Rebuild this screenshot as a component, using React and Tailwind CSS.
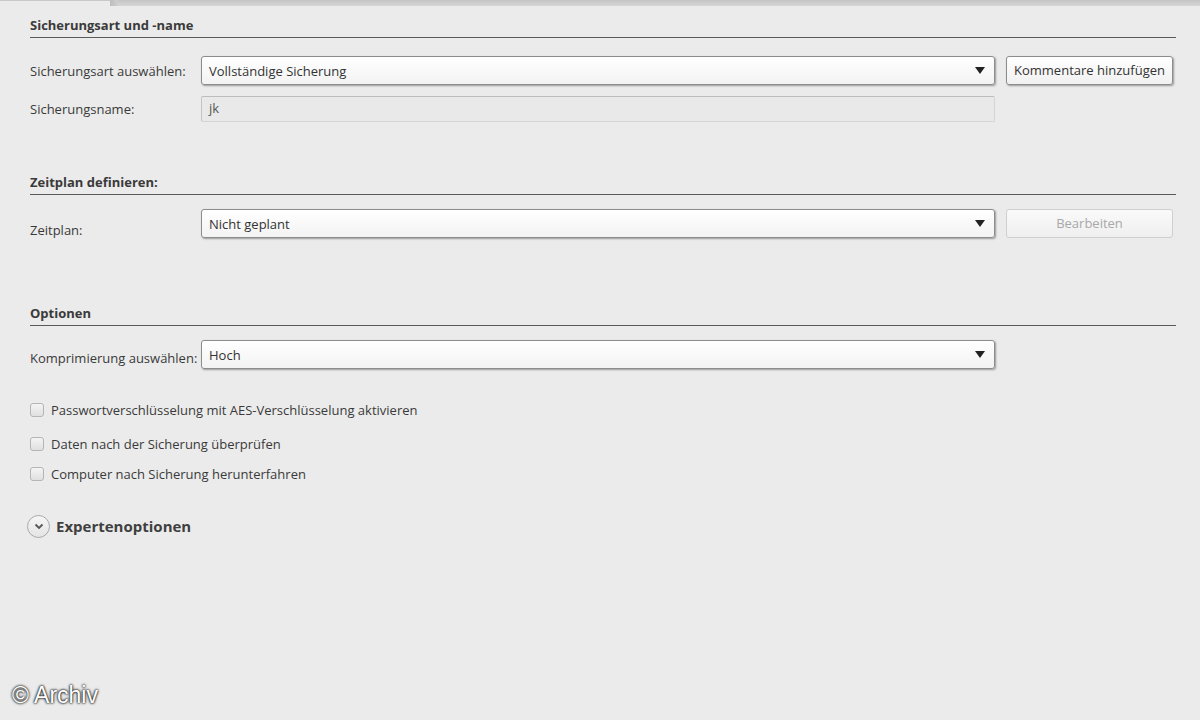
import React from 'react';

const font = { fontFamily: '"Open Sans", "Noto Sans", sans-serif' };

function SectionTitle({ children }) {
  return (
    <div className="border-b border-[#5a5a5a] pb-[4px] text-[13px] font-bold leading-[16px] text-[#3a3a3a]">
      {children}
    </div>
  );
}

function Select({ value }) {
  return (
    <div className="flex h-[29px] w-[794px] items-center justify-between rounded-[3px] border border-[#8c8c8c] bg-gradient-to-b from-white to-[#f3f3f3] pl-[7px] pr-[9px] shadow-[1px_1px_2px_rgba(0,0,0,0.35)]">
      <span className="text-[13px] leading-[18px] text-[#333]">{value}</span>
      <span className="h-0 w-0 border-x-[5px] border-t-[7px] border-x-transparent border-t-[#222]" />
    </div>
  );
}

function Button({ children, disabled }) {
  return (
    <div
      className={
        disabled
          ? 'flex h-[29px] w-[167px] items-center justify-center rounded-[3px] border border-[#cfcfcf] bg-gradient-to-b from-[#fafafa] to-[#efefef] text-[13px] text-[#a8a8a8]'
          : 'flex h-[29px] w-[167px] items-center justify-center rounded-[3px] border border-[#8c8c8c] bg-gradient-to-b from-white to-[#f1f1f1] text-[13px] text-[#333] shadow-[1px_1px_2px_rgba(0,0,0,0.35)]'
      }
    >
      {children}
    </div>
  );
}

function Check({ label, className }) {
  return (
    <div className={'flex h-[18px] items-center gap-[7px] ' + className}>
      <span className="h-[14px] w-[14px] rounded-[3px] border border-[#b5b5b5] bg-gradient-to-b from-[#f4f4f4] to-[#e0e0e0]" />
      <span className="text-[13px] leading-[18px] text-[#3a3a3a]">{label}</span>
    </div>
  );
}

export default function App() {
  return (
    <div className="relative h-[720px] w-[1200px] overflow-hidden bg-[#ebebeb]" style={font}>
      {/* tab strip at the top */}
      <div className="flex h-[6px]">
        <div className="w-[110px] border-t border-[#c8c8c8] bg-[#ebebeb]" />
        <div className="w-[8px] bg-gradient-to-r from-[#bdbdbd] to-[#cfcfcf]" />
        <div className="flex-1 bg-gradient-to-b from-[#c4c4c4] to-[#d6d6d6]" />
      </div>

      <div className="pl-[30px] pr-[24px] pt-[11px]">
        <SectionTitle>Sicherungsart und -name</SectionTitle>

        <div className="mt-[18px] flex items-center">
          <div className="w-[171px] text-[13px] leading-[18px] text-[#3a3a3a]">Sicherungsart auswählen:</div>
          <Select value="Vollständige Sicherung" />
          <div className="ml-[11px]">
            <Button>Kommentare hinzufügen</Button>
          </div>
        </div>

        <div className="mt-[11px] flex items-center">
          <div className="w-[171px] text-[13px] leading-[18px] text-[#3a3a3a]">Sicherungsname:</div>
          <div className="flex h-[26px] w-[794px] items-center rounded-[2px] border border-[#d4d4d4] border-t-[#bdbdbd] border-l-[#c4c4c4] bg-[#e9e9e9] px-[7px] text-[13px] text-[#555]">
            jk
          </div>
        </div>

        <div className="mt-[52px]">
          <SectionTitle>Zeitplan definieren:</SectionTitle>
        </div>

        <div className="mt-[14px] flex items-start">
          <div className="w-[171px] pt-[12px] text-[13px] leading-[18px] text-[#3a3a3a]">Zeitplan:</div>
          <Select value="Nicht geplant" />
          <div className="ml-[11px]">
            <Button disabled>Bearbeiten</Button>
          </div>
        </div>

        <div className="mt-[66px]">
          <SectionTitle>Optionen</SectionTitle>
        </div>

        <div className="mt-[14px] flex items-start">
          <div className="w-[171px] pt-[9px] text-[13px] leading-[18px] text-[#3a3a3a]">Komprimierung auswählen:</div>
          <Select value="Hoch" />
        </div>

        <div className="mt-[32px] flex flex-col">
          <Check label="Passwortverschlüsselung mit AES-Verschlüsselung aktivieren" className="" />
          <Check label="Daten nach der Sicherung überprüfen" className="mt-[16px]" />
          <Check label="Computer nach Sicherung herunterfahren" className="mt-[12px]" />
        </div>

        <div className="-ml-[3px] mt-[32px] flex items-center gap-[6px]">
          <span className="flex h-[23px] w-[23px] items-center justify-center rounded-full border border-[#a9a9a9] bg-gradient-to-b from-[#f6f6f6] to-[#e4e4e4]">
            <svg width="10" height="7" viewBox="0 0 10 7">
              <path d="M1.5 1.5 L5 5 L8.5 1.5" fill="none" stroke="#555" strokeWidth="1.8" />
            </svg>
          </span>
          <span className="text-[15px] font-bold text-[#3f3f3f]">Expertenoptionen</span>
        </div>
      </div>

      <div
        className="absolute bottom-[8px] left-[12px] text-[23px] text-white"
        style={{ fontFamily: '"Liberation Sans", Arial, sans-serif', textShadow: '0 0 3px #000, 0 0 2px #000' }}
      >
        © Archiv
      </div>
    </div>
  );
}
